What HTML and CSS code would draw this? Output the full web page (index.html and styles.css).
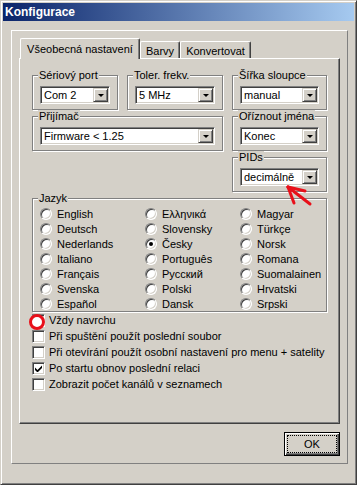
FILE: index.html
```html
<!DOCTYPE html>
<html lang="cs">
<head>
    <meta charset="UTF-8">
    <meta name="viewport" content="width=device-width, initial-scale=1.0">
    <title>Konfigurace</title>
    <link rel="stylesheet" href="styles.css">
</head>
<body>
    <div class="window">
        <div class="titlebar">Konfigurace</div>

        <div class="frame">
            <div class="tabs">
                <div class="tab selected tab-general">Všeobecná nastavení</div>
                <div class="tab tab-colors">Barvy</div>
                <div class="tab tab-convert">Konvertovat</div>
            </div>

            <div class="page">
                <div class="groups">
                    <div class="group">
                        <div class="group-label">Sériový port</div>
                        <div class="combo"><span class="combo-text">Com 2</span><span class="combo-button"></span></div>
                    </div>
                    <div class="group">
                        <div class="group-label">Toler. frekv.</div>
                        <div class="combo"><span class="combo-text">5 MHz</span><span class="combo-button"></span></div>
                    </div>
                    <div class="group">
                        <div class="group-label">Šířka sloupce</div>
                        <div class="combo"><span class="combo-text">manual</span><span class="combo-button"></span></div>
                    </div>
                    <div class="group wide">
                        <div class="group-label">Přijímač</div>
                        <div class="combo"><span class="combo-text">Firmware &lt; 1.25</span><span class="combo-button"></span></div>
                    </div>
                    <div class="group">
                        <div class="group-label">Oříznout jména</div>
                        <div class="combo"><span class="combo-text">Konec</span><span class="combo-button"></span></div>
                    </div>
                    <div class="group pids">
                        <div class="group-label">PIDs</div>
                        <div class="combo"><span class="combo-text">decimálně</span><span class="combo-button"></span></div>
                    </div>
                </div>

                <!-- Jazyk -->
                <div class="group lang">
                    <div class="group-label">Jazyk</div>
                    <div class="radios">
                        <div class="radio"><span class="radio-dot"></span>English</div>
                        <div class="radio"><span class="radio-dot"></span>Ελληνικά</div>
                        <div class="radio"><span class="radio-dot"></span>Magyar</div>
                        <div class="radio"><span class="radio-dot"></span>Deutsch</div>
                        <div class="radio"><span class="radio-dot"></span>Slovensky</div>
                        <div class="radio"><span class="radio-dot"></span>Türkçe</div>
                        <div class="radio"><span class="radio-dot"></span>Nederlands</div>
                        <div class="radio checked"><span class="radio-dot"></span>Česky</div>
                        <div class="radio"><span class="radio-dot"></span>Norsk</div>
                        <div class="radio"><span class="radio-dot"></span>Italiano</div>
                        <div class="radio"><span class="radio-dot"></span>Português</div>
                        <div class="radio"><span class="radio-dot"></span>Romana</div>
                        <div class="radio"><span class="radio-dot"></span>Français</div>
                        <div class="radio"><span class="radio-dot"></span>Русский</div>
                        <div class="radio"><span class="radio-dot"></span>Suomalainen</div>
                        <div class="radio"><span class="radio-dot"></span>Svenska</div>
                        <div class="radio"><span class="radio-dot"></span>Polski</div>
                        <div class="radio"><span class="radio-dot"></span>Hrvatski</div>
                        <div class="radio"><span class="radio-dot"></span>Español</div>
                        <div class="radio"><span class="radio-dot"></span>Dansk</div>
                        <div class="radio"><span class="radio-dot"></span>Srpski</div>
                    </div>
                </div>

                <div class="checks">
                    <div class="check"><span class="box"></span>Vždy navrchu</div>
                    <div class="check"><span class="box"></span>Při spuštění použít poslední soubor</div>
                    <div class="check"><span class="box"></span>Při otevírání použít osobní nastavení pro menu + satelity</div>
                    <div class="check checked"><span class="box"><svg width="7" height="7" viewBox="0 0 7 7"><polygon points="0,2.5 2.5,5 7,0.5 7,3 2.5,7.5 0,5" fill="#000"/></svg></span>Po startu obnov poslední relaci</div>
                    <div class="check"><span class="box"></span>Zobrazit počet kanálů v seznamech</div>
                </div>

                <!-- red marks drawn over the screenshot -->
                <svg class="mark-circle" width="18" height="18" viewBox="0 0 18 18">
                    <circle cx="9" cy="9" r="6.5" fill="#fff" stroke="#e8101a" stroke-width="3"/>
                </svg>
                <svg class="mark-arrow" width="30" height="25" viewBox="0 0 30 25">
                    <g stroke="#e8101a" stroke-width="3" stroke-linecap="round" fill="none">
                        <line x1="4" y1="4" x2="26" y2="21"/>
                        <line x1="4" y1="4" x2="21" y2="8"/>
                        <line x1="4" y1="4" x2="10" y2="20"/>
                    </g>
                </svg>
            </div>

            <div class="buttons">
                <button class="ok" type="button"><span>OK</span></button>
            </div>
        </div>
    </div>
</body>
</html>
```

FILE: styles.css
```css
body {
    margin: 0;
    font-family: "Liberation Sans", Arial, sans-serif;
    font-size: 11px;
    color: #000;
    background: #d4d0c8;
}
.window {
    box-sizing: border-box;
    width: 357px;
    height: 485px;
    padding: 2px;
    background: #d4d0c8;
    border: 1px solid;
    border-color: #d4d0c8 #404040 #404040 #d4d0c8;
    box-shadow: inset 1px 1px 0 #fff, inset -1px -1px 0 #808080;
}
.titlebar {
    height: 18px;
    line-height: 18px;
    padding-left: 2px;
    background: linear-gradient(to right, #0a246a, #a6caf0);
    color: #fff;
    font-size: 12px;
    font-weight: bold;
}
.frame {
    box-sizing: border-box;
    width: 337px;
    margin: 9px 0 0 8px;
    padding: 7px;
    border: 1px solid;
    border-color: #fff #808080 #808080 #fff;
}

/* tabs */
.tabs {
    position: relative;
    z-index: 1;
    display: flex;
    align-items: flex-end;
    height: 20px;
}
.tab {
    box-sizing: border-box;
    height: 17px;
    padding-top: 3px;
    line-height: 13px;
    text-align: center;
    white-space: nowrap;
    background: #d4d0c8;
    border: 1px solid;
    border-bottom: none;
    border-color: #fff #404040 #d4d0c8 #fff;
    border-radius: 2px 2px 0 0;
    box-shadow: inset -1px 0 0 #808080;
}
.tab.selected {
    height: 21px;
    margin-bottom: -1px;
    margin-left: 1px;
    padding-top: 4px;
}
.tab-general {
    width: 120px;
}
.tab-colors {
    width: 40px;
}
.tab-convert {
    width: 71px;
}
.page {
    position: relative;
    box-sizing: border-box;
    height: 366px;
    padding: 16px 12px 0;
    border: 1px solid;
    border-color: #fff #404040 #404040 #fff;
    box-shadow: inset -1px -1px 0 #808080;
}

/* group boxes */
.groups {
    display: grid;
    grid-template-columns: 86px 96px 95px;
    column-gap: 9px;
    row-gap: 6px;
}
.group {
    padding: 0 7px 5px;
    border: 1px solid #808080;
    box-shadow: inset 1px 1px 0 #fff, 1px 1px 0 #fff;
}
.group.wide {
    grid-column: 1 / 3;
}
.group.pids {
    grid-column: 3;
}
.group-label {
    width: max-content;
    margin: -7px 0 0 -2px;
    padding: 0 1px;
    line-height: 13px;
    background: #d4d0c8;
}
.combo {
    display: flex;
    box-sizing: border-box;
    height: 18px;
    margin-top: 4px;
    padding: 1px;
    background: #fff;
    border: 1px solid;
    border-color: #808080 #fff #fff #808080;
    box-shadow: inset 1px 1px 0 #404040, inset -1px -1px 0 #d4d0c8;
}
.combo-text {
    flex: 1;
    padding-left: 2px;
    line-height: 14px;
    white-space: nowrap;
    overflow: hidden;
}
.combo-button {
    display: flex;
    align-items: center;
    justify-content: center;
    box-sizing: border-box;
    width: 15px;
    background: #d4d0c8;
    border: 1px solid;
    border-color: #d4d0c8 #404040 #404040 #d4d0c8;
    box-shadow: inset 1px 1px 0 #fff, inset -1px -1px 0 #808080;
}
.combo-button::after {
    content: "";
    border-left: 3px solid transparent;
    border-right: 3px solid transparent;
    border-top: 3px solid #000;
}

/* language radios */
.lang {
    margin-top: 6px;
    padding-bottom: 0;
}
.radios {
    display: grid;
    grid-template-columns: 105px 95px 1fr;
    grid-auto-rows: 15px;
    margin-top: 1px;
}
.radio {
    display: flex;
    align-items: center;
    gap: 5px;
    white-space: nowrap;
}
.radio-dot {
    display: flex;
    align-items: center;
    justify-content: center;
    box-sizing: border-box;
    width: 12px;
    height: 12px;
    border-radius: 50%;
    background: #fff;
    border: 1px solid;
    border-color: #808080 #fff #fff #808080;
    box-shadow: inset 1px 1px 0 #404040, inset -1px -1px 0 #d4d0c8;
}
.radio.checked .radio-dot::after {
    content: "";
    width: 4px;
    height: 4px;
    border-radius: 50%;
    background: #000;
}

/* check boxes */
.check {
    display: flex;
    align-items: center;
    gap: 4px;
    height: 16px;
    white-space: nowrap;
}
.box {
    display: flex;
    align-items: center;
    justify-content: center;
    box-sizing: border-box;
    width: 13px;
    height: 13px;
    background: #fff;
    border: 1px solid;
    border-color: #808080 #fff #fff #808080;
    box-shadow: inset 1px 1px 0 #404040, inset -1px -1px 0 #d4d0c8;
}

/* annotations */
.mark-circle {
    position: absolute;
    left: 8px;
    top: 254px;
}
.mark-arrow {
    position: absolute;
    left: 264px;
    top: 124px;
}

/* button row */
.buttons {
    display: flex;
    justify-content: flex-end;
    margin-top: 8px;
}
.ok {
    box-sizing: border-box;
    width: 56px;
    height: 24px;
    padding: 2px;
    font: inherit;
    color: #000;
    background: #d4d0c8;
    border: 1px solid #000;
    box-shadow: inset 1px 1px 0 #fff, inset -1px -1px 0 #404040, inset -2px -2px 0 #808080;
}
.ok span {
    display: block;
    box-sizing: border-box;
    height: 100%;
    line-height: 16px;
    border: 1px dotted #000;
}
```
